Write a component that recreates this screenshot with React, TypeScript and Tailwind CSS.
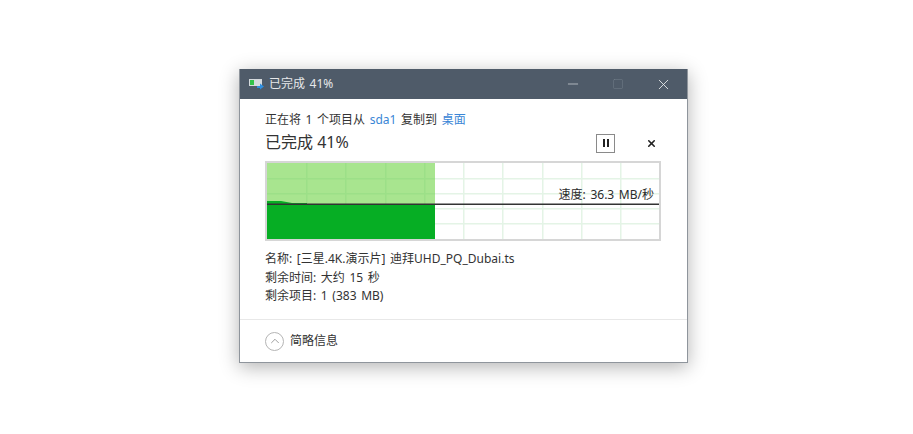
import { X, Minus, Square, ChevronUp } from "lucide-react";

const FONT = "font-['Noto_Sans','Noto_Sans_CJK_SC',sans-serif]";

const V_LINES = [40, 79, 119, 158, 197, 236, 276, 315, 354];
const H_LINES = [16, 31, 46, 61];

function CopyIcon() {
  return (
    <svg width="16" height="12" viewBox="0 0 16 12" className="shrink-0">
      <rect x="0" y="1" width="13" height="7" fill="#d5dadd" />
      <rect x="1" y="2" width="4" height="5" fill="#33c24a" />
      <path d="M8 8h3V5.5L15 8.5 11 11.5V10H8z" fill="#2f8fe0" />
    </svg>
  );
}

// graph body, 392x76 inner area
function SpeedGraph() {
  const w = 392;
  const h = 76;
  const done = 166;
  return (
    <div className="relative h-[80px] w-[396px] border-2 border-[#d6d6d6] bg-white">
      <svg width={w} height={h} viewBox={`0 0 ${w} ${h}`} className="block">
        {V_LINES.map((x) => (
          <rect key={x} x={x - 1} y="0" width="1.5" height={h} fill="#e4f4e6" />
        ))}
        {H_LINES.map((y) => (
          <rect key={y} x="0" y={y - 1} width={w} height="1.5" fill="#e4f4e6" />
        ))}
        <rect x="0" y="0" width={done + 2} height={h} fill="#a8e58f" />
        {V_LINES.filter((x) => x < done).map((x) => (
          <rect key={x} x={x - 1} y="0" width="1.5" height={h} fill="#9ce088" />
        ))}
        {H_LINES.filter((y) => y < 40).map((y) => (
          <rect key={y} x="0" y={y - 1} width={done + 2} height="1.5" fill="#9ce088" />
        ))}
        <path d="M0 38H14L25 40H40V76H0Z" fill="#06ae24" />
        <rect x="0" y="42" width={done + 2} height={h - 42} fill="#06ae24" />
        <rect x="0" y="40.5" width={w} height="1.5" fill="#333333" />
      </svg>
      <span className="absolute right-[5px] top-[24px] text-[12px] leading-[16px] text-[#2b2b2b] [word-spacing:1.5px]">
        速度: 36.3 MB/秒
      </span>
    </div>
  );
}

export default function App() {
  return (
    <div className={`${FONT} flex h-[434px] w-[913px] items-start bg-white pl-[239px] pt-[69px]`}>
      <div className="flex h-[294px] w-[449px] flex-col border-r border-b border-l border-[#8f959c] bg-white shadow-[0_4px_18px_rgba(0,0,0,0.3)]">
        <div className="flex h-[30px] shrink-0 items-center bg-[#4f5b69] pl-[9px]">
          <CopyIcon />
          <span className="ml-[4px] flex-1 text-[12px] text-[#e6e8ea] [word-spacing:1.5px]">已完成 41%</span>
          <div className="flex items-center gap-[31px] pr-[15px]">
            <Minus size={16} strokeWidth={1} className="text-[#dfe2e5]" />
            <Square size={12} strokeWidth={1} className="text-[#75808c]" />
            <X size={17} strokeWidth={1.2} className="text-[#eceef0]" />
          </div>
        </div>

        <div className="flex flex-1 flex-col pl-[25px] pr-[26px]">
          <div className="mt-[12px] text-[12px] leading-[17px] text-[#333333] [word-spacing:1.5px]">
            正在将 1 个项目从 <span className="text-[#3a86d6]">sda1</span> 复制到{" "}
            <span className="text-[#3a86d6]">桌面</span>
          </div>
          <div className="flex h-[28px] items-center justify-between">
            <span className="text-[16px] leading-[22px] text-[#333333]">已完成 41%</span>
            <div className="relative top-[1px] flex items-center gap-[31px] pr-[4px]">
              <span className="flex h-[19px] w-[19px] items-center justify-center gap-[2px] border border-[#8a8a8a]">
                <span className="h-[8px] w-[2px] bg-[#222222]" />
                <span className="h-[8px] w-[2px] bg-[#222222]" />
              </span>
              <X size={11} strokeWidth={3.5} className="text-[#222222]" />
            </div>
          </div>

          <div className="mt-[5px]">
            <SpeedGraph />
          </div>

          <div className="mt-[9px] flex flex-col text-[12px] leading-[18.5px] text-[#333333] [word-spacing:1.5px]">
            <span>名称: [三星.4K.演示片] 迪拜UHD_PQ_Dubai.ts</span>
            <span>剩余时间: 大约 15 秒</span>
            <span>剩余项目: 1 (383 MB)</span>
          </div>
        </div>

        <div className="flex h-[43px] shrink-0 items-center gap-[6px] border-t border-[#e8e8e8] pl-[25px]">
          <span className="flex h-[19px] w-[19px] items-center justify-center rounded-full border border-[#b5b5b5]">
            <ChevronUp size={14} strokeWidth={1.2} className="text-[#777777]" />
          </span>
          <span className="text-[12px] text-[#333333]">简略信息</span>
        </div>
      </div>
    </div>
  );
}
